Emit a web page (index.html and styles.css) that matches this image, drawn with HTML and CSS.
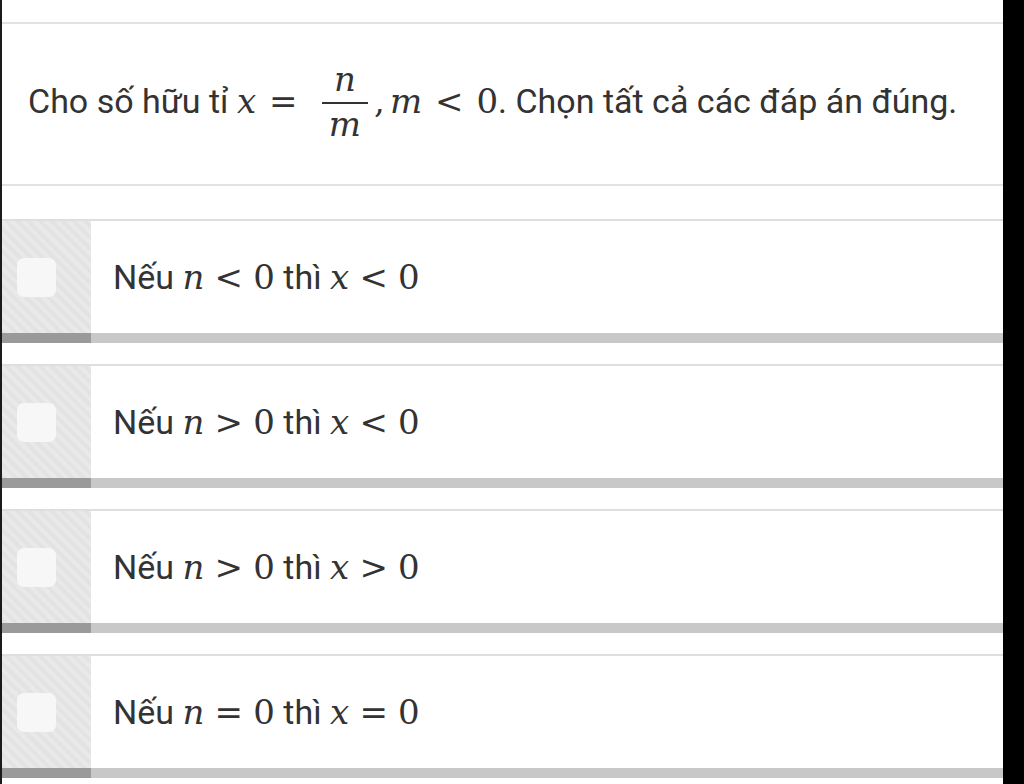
FILE: index.html
```html
<!DOCTYPE html>
<html lang="vi">
<head>
<meta charset="utf-8">
<link rel="stylesheet" href="styles.css">
</head>
<body>
<div class="page">
  <div class="content">
    <div class="question">
      <p class="qtext">Cho số hữu tỉ <span class="math"><i class="v">x</i><span class="op">=</span><span class="frac"><i class="v num">n</i><span class="fbar"></span><i class="v den">m</i></span><span class="punct">,</span><i class="v">m</i><span class="op">&lt;</span>0</span>. Chọn tất cả các đáp án đúng.</p>
    </div>
    <div class="options">
      <div class="option">
        <div class="opt-body">
          <div class="opt-check"><span class="box"></span></div>
          <div class="opt-text">Nếu <span class="math"><i class="v">n</i><span class="op">&lt;</span>0</span> thì <span class="math"><i class="v">x</i><span class="op">&lt;</span>0</span></div>
        </div>
        <div class="opt-bar"></div>
      </div>
      <div class="option">
        <div class="opt-body">
          <div class="opt-check"><span class="box"></span></div>
          <div class="opt-text">Nếu <span class="math"><i class="v">n</i><span class="op">&gt;</span>0</span> thì <span class="math"><i class="v">x</i><span class="op">&lt;</span>0</span></div>
        </div>
        <div class="opt-bar"></div>
      </div>
      <div class="option">
        <div class="opt-body">
          <div class="opt-check"><span class="box"></span></div>
          <div class="opt-text">Nếu <span class="math"><i class="v">n</i><span class="op">&gt;</span>0</span> thì <span class="math"><i class="v">x</i><span class="op">&gt;</span>0</span></div>
        </div>
        <div class="opt-bar"></div>
      </div>
      <div class="option">
        <div class="opt-body">
          <div class="opt-check"><span class="box"></span></div>
          <div class="opt-text">Nếu <span class="math"><i class="v">n</i><span class="op">=</span>0</span> thì <span class="math"><i class="v">x</i><span class="op">=</span>0</span></div>
        </div>
        <div class="opt-bar"></div>
      </div>
    </div>
  </div>
</div>
</body>
</html>
```

FILE: styles.css
```css
html, body {
  margin: 0;
  padding: 0;
  background: #000;
}

.page {
  width: 1024px;
  height: 784px;
  overflow: hidden;
  box-sizing: border-box;
  border-left: 2px solid #1a1a1a;
  border-right: 21px solid #000;
  background: #fff;
  font-family: Roboto, "Noto Sans", sans-serif;
  color: #333;
}

.content {
  padding-top: 22px;
}

.question {
  height: 160px;
  box-sizing: content-box;
  border-top: 2px solid #e2e2e2;
  border-bottom: 2px solid #e2e2e2;
  display: flex;
  align-items: center;
  padding-left: 26px;
}

.qtext {
  margin: 0 0 5px;
  font-size: 34px;
  line-height: 1;
}

.math {
  font-family: "DejaVu Serif", "Liberation Serif", serif;
  font-size: 1em;
  white-space: nowrap;
}

.v {
  font-style: italic;
}

.op {
  margin: 0 0.3em;
}

.qtext .op {
  margin: 0 0.38em;
}

.punct {
  margin-right: 0.15em;
}

.frac {
  display: inline-flex;
  flex-direction: column;
  align-items: center;
  vertical-align: 0.64em;
  margin: 0 0.18em 0 0.34em;
  line-height: 1;
}

.frac .num {
  padding: 0 0.2em 0.16em;
}

.frac .den {
  padding: 0.1em 0.2em 0;
}

.fbar {
  align-self: stretch;
  height: 2px;
  background: #333;
}

.options {
  margin-top: 33px;
}

.option {
  border-top: 2px solid #dedede;
  margin-bottom: 21px;
}

.opt-body {
  height: 112px;
  display: flex;
  align-items: stretch;
}

.opt-check {
  width: 89px;
  flex: none;
  display: flex;
  align-items: center;
  padding-left: 15px;
  box-sizing: border-box;
  background-color: #e6e6e6;
  background-image: repeating-linear-gradient(45deg, #e3e3e3 0 4px, #e9e9e9 4px 8px);
}

.box {
  width: 39px;
  height: 39px;
  border-radius: 7px;
  background: #f7f7f7;
}

.opt-text {
  display: flex;
  align-items: center;
  padding-left: 22px;
  font-size: 34px;
  line-height: 1.2;
  white-space: pre;
}

.opt-bar {
  height: 10px;
  background: linear-gradient(to right, #9a9a9a 0 89px, #c8c8c8 89px);
}
```
